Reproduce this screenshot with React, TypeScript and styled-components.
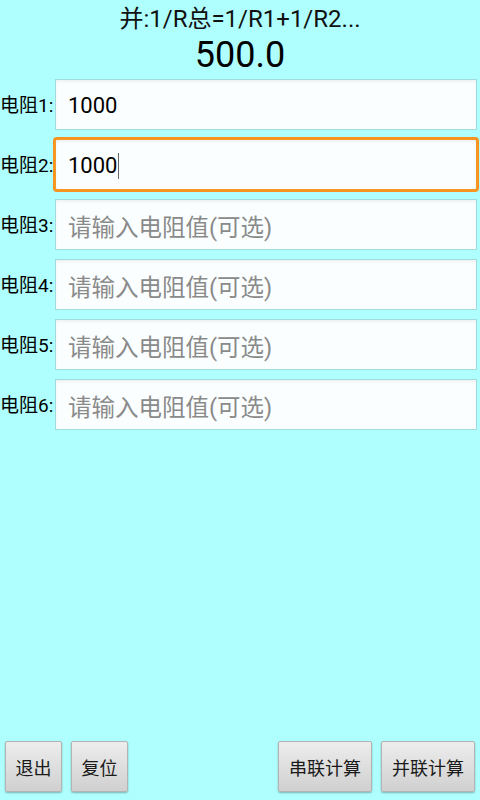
import styled, { createGlobalStyle, css } from 'styled-components';

const GlobalStyle = createGlobalStyle`
  html, body {
    margin: 0;
    padding: 0;
    background: #b0ffff;
  }
  body {
    font-family: Roboto, "Noto Sans CJK SC", sans-serif;
    color: #111;
  }
`;

const Page = styled.div`
  height: 800px;
  display: flex;
  flex-direction: column;
  background: #b0ffff;
`;

const Formula = styled.div`
  padding-top: 4px;
  height: 30px;
  line-height: 30px;
  text-align: center;
  font-size: 24px;
  color: #111;
`;

const Result = styled.div`
  height: 42px;
  line-height: 42px;
  text-align: center;
  font-size: 36px;
  color: #000;
`;

const Rows = styled.div`
  display: flex;
  flex-direction: column;
`;

const Row = styled.div`
  height: 60px;
  display: flex;
  align-items: flex-start;
  box-sizing: border-box;
  padding: 3px 3px 0 0;
`;

const Label = styled.div`
  width: 55px;
  height: 51px;
  line-height: 53px;
  flex-shrink: 0;
  font-size: 19px;
  color: #000;
  white-space: nowrap;
`;

const Field = styled.div<{ $focused?: boolean }>`
  flex: 1;
  height: 51px;
  box-sizing: border-box;
  display: flex;
  align-items: center;
  padding: 2px 0 0 12px;
  background: #fbfefe;
  border: 1px solid #a3dada;
  box-shadow: inset 0 2px 3px rgba(0, 0, 0, 0.05);
  font-size: 22px;
  ${({ $focused }) =>
    $focused &&
    css`
      border-color: #f39a2a;
      border-radius: 2px;
      box-shadow: 0 0 0 2px #f7931e, inset 0 2px 3px rgba(0, 0, 0, 0.05);
    `}
`;

const Value = styled.span`
  color: #000;
`;

const Placeholder = styled.span`
  color: #8a8a8a;
  font-size: 23.5px;
`;

const Caret = styled.span`
  display: inline-block;
  width: 1px;
  height: 26px;
  margin-left: 1px;
  background: #666;
`;

const Spacer = styled.div`
  flex: 1;
`;

const Toolbar = styled.div`
  display: flex;
  align-items: center;
  padding: 0 5px 8px 5px;
`;

const Group = styled.div`
  display: flex;
  gap: 9px;
`;

const Button = styled.button<{ $wide?: boolean }>`
  width: ${({ $wide }) => ($wide ? '94px' : '57px')};
  height: 51px;
  padding: 0;
  font-family: Roboto, "Noto Sans CJK SC", sans-serif;
  font-size: 18px;
  color: #1a1a1a;
  background: linear-gradient(#ededed, #d0d0d0);
  border: 1px solid #b3b3b3;
  border-radius: 2px;
  box-shadow: 0 1px 2px rgba(0, 0, 0, 0.3);
`;

const resistors = [
  { value: '1000' },
  { value: '1000', focused: true },
  { value: '' },
  { value: '' },
  { value: '' },
  { value: '' },
];

export default function App() {
  return (
    <Page>
      <GlobalStyle />
      <Formula>并:1/R总=1/R1+1/R2...</Formula>
      <Result>500.0</Result>
      <Rows>
        {resistors.map((r, i) => (
          <Row key={i}>
            <Label>电阻{i + 1}:</Label>
            <Field $focused={r.focused}>
              {r.value ? (
                <Value>{r.value}</Value>
              ) : (
                <Placeholder>请输入电阻值(可选)</Placeholder>
              )}
              {r.focused && <Caret />}
            </Field>
          </Row>
        ))}
      </Rows>
      <Spacer />
      <Toolbar>
        <Group>
          <Button>退出</Button>
          <Button>复位</Button>
        </Group>
        <Spacer />
        <Group>
          <Button $wide>串联计算</Button>
          <Button $wide>并联计算</Button>
        </Group>
      </Toolbar>
    </Page>
  );
}
